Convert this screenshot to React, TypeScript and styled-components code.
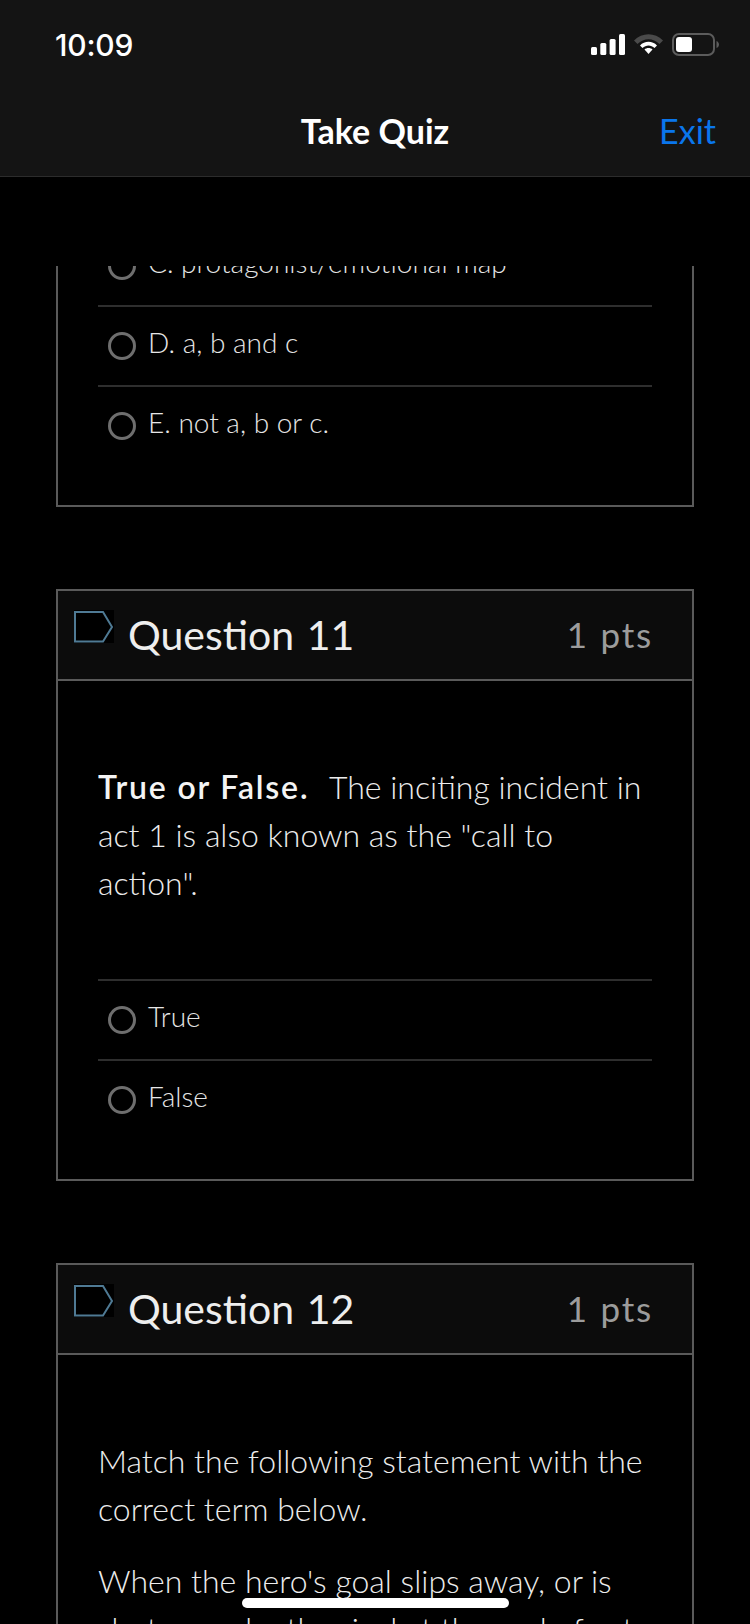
import React from "react";
import styled, { createGlobalStyle } from "styled-components";

const GlobalStyle = createGlobalStyle`
  html, body {
    margin: 0;
    padding: 0;
    background: #000;
  }
  body {
    font-family: "Lato", "Liberation Sans", sans-serif;
  }
`;

const RadioRow: React.FC<{ label: string }> = ({ label }) => (
  <AnswerRow>
    <Radio />
    <AnswerLabel>{label}</AnswerLabel>
  </AnswerRow>
);

const QuestionHead: React.FC<{ title: string }> = ({ title }) => (
  <CardHeader>
    <FlagIcon width="40" height="33" viewBox="0 0 40 33">
      <rect width="40" height="33" fill="#000" />
      <path d="M1 2 H29 L38 17 L29 31.5 H1 Z" fill="none" stroke="#4f7a94" strokeWidth="2" />
    </FlagIcon>
    <QuestionTitle>{title}</QuestionTitle>
    <Points>1 pts</Points>
  </CardHeader>
);

export default function App() {
  return (
    <Screen>
      <GlobalStyle />
      <TopBars>
        <StatusBar>
          <Clock>10:09</Clock>
          <StatusIcons>
            <svg width="34" height="21" viewBox="0 0 34 21" fill="#fff">
              <rect x="0" y="13" width="6" height="8" rx="1.5" />
              <rect x="9.3" y="9" width="6" height="12" rx="1.5" />
              <rect x="18.6" y="5" width="6" height="16" rx="1.5" />
              <rect x="28" y="0" width="6" height="21" rx="1.5" />
            </svg>
            <svg width="29" height="21" viewBox="0 0 29 21">
              <path d="M0 6.5 C8 -2 21 -2 29 6.5 L25.5 10 C19 3.5 10 3.5 3.5 10 Z" fill="#4a4a4a" />
              <path d="M6 11.5 C10.5 6.5 18.5 6.5 23 11.5 L20.5 14 C17 10.5 12 10.5 8.5 14 Z" fill="#fff" />
              <path d="M10.5 15.5 C12.5 13.5 16.5 13.5 18.5 15.5 L14.5 20 Z" fill="#fff" />
            </svg>
            <svg width="47" height="23" viewBox="0 0 47 23">
              <rect x="1" y="1" width="41" height="21" rx="6" fill="none" stroke="#5c5c5c" strokeWidth="2" />
              <rect x="4" y="4" width="16" height="15" rx="3" fill="#fff" />
              <path d="M44.5 8 C46 8.5 47 10 47 11.5 C47 13 46 14.5 44.5 15 Z" fill="#5c5c5c" />
            </svg>
          </StatusIcons>
        </StatusBar>
        <NavBar>
          <NavTitle>Take Quiz</NavTitle>
          <ExitLink>Exit</ExitLink>
        </NavBar>
      </TopBars>

      <ScrollArea>
        <ScrollContent>
          <Card $clipped>
            <AnswerList>
              <RadioRow label="C. protagonist/emotional map" />
              <RadioRow label="D. a, b and c" />
              <RadioRow label="E. not a, b or c." />
            </AnswerList>
          </Card>

          <Card>
            <QuestionHead title="Question 11" />
            <QuestionBody>
              <BodyText>
                <strong>True or False.</strong>
                <StatementGap /> The inciting incident in act 1 is also known as the "call to action".
              </BodyText>
            </QuestionBody>
            <AnswerList>
              <RadioRow label="True" />
              <RadioRow label="False" />
            </AnswerList>
          </Card>

          <Card>
            <QuestionHead title="Question 12" />
            <QuestionBody>
              <BodyText>Match the following statement with the correct term below.</BodyText>
              <BodyText>
                When the hero's goal slips away, or is shot away by the rival at the end of act 2.
              </BodyText>
            </QuestionBody>
          </Card>
        </ScrollContent>
      </ScrollArea>

      <HomeIndicator />
    </Screen>
  );
}

const Screen = styled.div`
  position: relative;
  width: 750px;
  height: 1624px;
  overflow: hidden;
  display: flex;
  flex-direction: column;
  background: #000;
  color: #fff;
`;

const TopBars = styled.header`
  flex: none;
  background: #141414;
  border-bottom: 1px solid #2c2c2c;
`;

const StatusBar = styled.div`
  height: 88px;
  padding: 1px 31px 0 55px;
  box-sizing: border-box;
  display: flex;
  align-items: center;
  justify-content: space-between;
`;

const Clock = styled.span`
  font-family: "Inter", "Liberation Sans", sans-serif;
  font-size: 30px;
  font-weight: 500;
  letter-spacing: -0.2px;
  color: #fff;
`;

const StatusIcons = styled.div`
  display: flex;
  align-items: center;
  gap: 9px;
`;

const NavBar = styled.nav`
  position: relative;
  height: 88px;
  padding-bottom: 4px;
  box-sizing: border-box;
  display: flex;
  align-items: center;
  justify-content: center;
`;

const NavTitle = styled.h1`
  margin: 0;
  font-size: 34px;
  font-weight: 700;
  color: #fff;
`;

const ExitLink = styled.a`
  position: absolute;
  right: 34px;
  font-size: 34px;
  font-weight: 400;
  color: #0a76ec;
`;

const ScrollArea = styled.main`
  flex: 1;
  margin-top: 89px;
  overflow: hidden;
`;

const ScrollContent = styled.div`
  margin-top: -41px;
  padding: 0 56px;
  display: flex;
  flex-direction: column;
  gap: 82px;
`;

const Card = styled.section<{ $clipped?: boolean }>`
  border: 2px solid #5a5a5a;
  border-top: ${(p) => (p.$clipped ? "none" : "2px solid #5a5a5a")};
  padding-bottom: 40px;
`;

const CardHeader = styled.div`
  height: 90px;
  padding: 19px 39px 0 16px;
  box-sizing: border-box;
  display: flex;
  align-items: flex-start;
  background: #0c0c0c;
  border-bottom: 2px solid #5a5a5a;
`;

const FlagIcon = styled.svg`
  flex: none;
  display: block;
`;

const QuestionTitle = styled.h2`
  flex: 1;
  margin: 1px 0 0 14px;
  font-size: 41px;
  font-weight: 400;
  line-height: 48px;
  word-spacing: 2px;
  font-variant-numeric: tabular-nums;
  color: #eeeeee;
`;

const Points = styled.span`
  font-size: 35px;
  font-weight: 400;
  line-height: 48px;
  letter-spacing: 1.8px;
  word-spacing: 1px;
  font-variant-numeric: tabular-nums;
  color: #9c9c9c;
`;

const QuestionBody = styled.div`
  padding: 82px 40px 72px;
`;

const BodyText = styled.p`
  margin: 0;
  font-size: 32px;
  font-weight: 300;
  line-height: 48px;
  color: #ececec;

  & + & {
    margin-top: 24px;
  }

  strong {
    font-weight: 600;
    letter-spacing: 1.8px;
    color: #f4f4f4;
  }
`;

const StatementGap = styled.span`
  display: inline-block;
  width: 12px;
`;

const AnswerList = styled.div`
  margin: 0 40px;
`;

const AnswerRow = styled.div`
  height: 80px;
  box-sizing: border-box;
  display: flex;
  align-items: center;
  padding-left: 10px;
  border-top: 2px solid #2e2e2e;
`;

const Radio = styled.span`
  flex: none;
  width: 28px;
  height: 28px;
  box-sizing: border-box;
  border: 3px solid #6e6e6e;
  border-radius: 50%;
`;

const AnswerLabel = styled.span`
  margin: -9px 0 0 12px;
  font-size: 28px;
  font-weight: 300;
  color: #e6e6e6;
`;

const HomeIndicator = styled.div`
  position: absolute;
  left: 242px;
  bottom: 16px;
  width: 267px;
  height: 10px;
  border-radius: 5px;
  background: #fff;
`;
